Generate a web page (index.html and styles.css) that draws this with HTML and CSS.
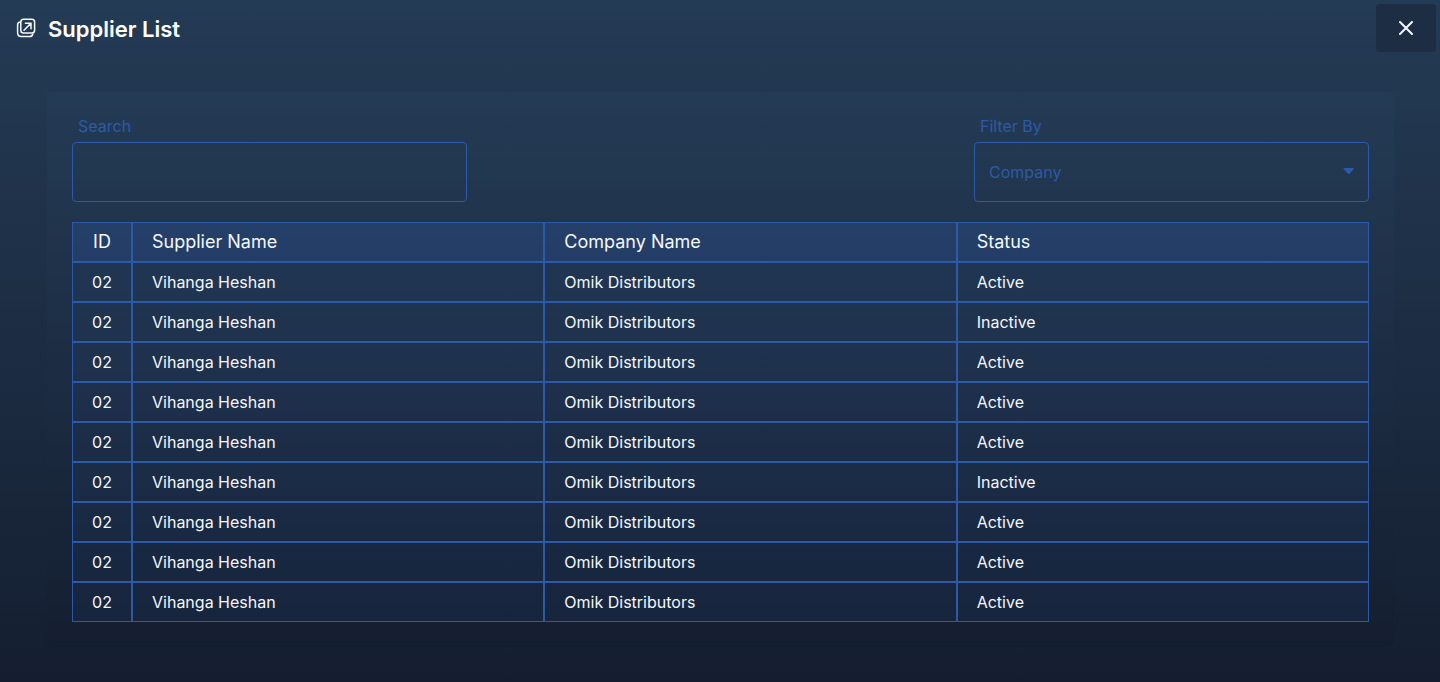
FILE: index.html
```html
<!DOCTYPE html>
<html lang="en">
<head>
<meta charset="utf-8">
<title>Supplier List</title>
<meta name="viewport" content="width=device-width, initial-scale=1">
<link rel="stylesheet" href="styles.css">
</head>
<body>
<header class="topbar">
  <svg class="topbar-icon" viewBox="0 0 20 20" aria-hidden="true">
    <rect x="4.800" y="1.200" width="13.800" height="13.800" rx="2.800"/>
    <path d="M4 4C2.400 4.300 1.600 5.200 1.600 6.800V14.800Q1.600 18.600 5.400 18.600H13.600C15.400 18.600 16.400 17.600 16.800 16"/>
    <path d="M8 12.200 14.600 5.600M9.400 5.200H15V10.800"/>
  </svg>
  <h1 class="title">Supplier List</h1>
  <button class="close" type="button" aria-label="Close">
    <svg class="close-icon" viewBox="0 0 14 14" aria-hidden="true"><path d="M1 1 13 13M13 1 1 13"/></svg>
  </button>
</header>
<main class="panel">
  <form class="filters">
    <div class="field">
      <label class="label" for="search">Search</label>
      <input class="control" id="search" type="text">
    </div>
    <div class="field">
      <label class="label" for="filter">Filter By</label>
      <div class="select-wrap">
        <select class="control select" id="filter"><option>Company</option></select>
        <svg class="caret" viewBox="0 0 12 7" aria-hidden="true"><path d="M1 0H10.500Q11.500 0 10.800 1L6.500 5.700Q5.800 6.500 5 5.700L.6 1Q0 0 1 0Z"/></svg>
      </div>
    </div>
  </form>
  <table class="table">
    <thead><tr><th class="id">ID</th><th>Supplier Name</th><th>Company Name</th><th>Status</th></tr></thead>
    <tbody>
      <tr><td class="id">02</td><td>Vihanga Heshan</td><td>Omik Distributors</td><td>Active</td></tr>
      <tr><td class="id">02</td><td>Vihanga Heshan</td><td>Omik Distributors</td><td>Inactive</td></tr>
      <tr><td class="id">02</td><td>Vihanga Heshan</td><td>Omik Distributors</td><td>Active</td></tr>
      <tr><td class="id">02</td><td>Vihanga Heshan</td><td>Omik Distributors</td><td>Active</td></tr>
      <tr><td class="id">02</td><td>Vihanga Heshan</td><td>Omik Distributors</td><td>Active</td></tr>
      <tr><td class="id">02</td><td>Vihanga Heshan</td><td>Omik Distributors</td><td>Inactive</td></tr>
      <tr><td class="id">02</td><td>Vihanga Heshan</td><td>Omik Distributors</td><td>Active</td></tr>
      <tr><td class="id">02</td><td>Vihanga Heshan</td><td>Omik Distributors</td><td>Active</td></tr>
      <tr><td class="id">02</td><td>Vihanga Heshan</td><td>Omik Distributors</td><td>Active</td></tr>
    </tbody>
  </table>
</main>
</body>
</html>
```
FILE: styles.css
```css
:root {
  --blue: #2d5aa8;
}

* {
  box-sizing: border-box;
}

body {
  margin: 0;
  min-height: 100vh;
  background: linear-gradient(#243b55, #141e30);
  color: #f5f7fa;
  font-family: Inter, "Liberation Sans", sans-serif;
  font-size: 16px;
}

.topbar {
  display: flex;
  align-items: center;
  gap: 12px;
  padding: 4px 4px 4px 16px;
}

.topbar-icon {
  width: 20px;
  height: 20px;
  fill: none;
  stroke: #f5f7fa;
  stroke-width: 1.5;
  stroke-linecap: round;
  stroke-linejoin: round;
}

.title {
  flex: 1;
  margin: 0;
  padding-top: 2px;
  color: #fff;
  font-size: 22px;
  font-weight: 600;
  line-height: 28px;
}

.close {
  display: flex;
  align-items: center;
  justify-content: center;
  width: 60px;
  height: 48px;
  padding: 0;
  border: 0;
  border-radius: 4px;
  background: #1d2d44;
}

.close-icon {
  width: 14px;
  height: 14px;
  fill: none;
  stroke: #f5f7fa;
  stroke-width: 2;
  stroke-linecap: round;
}

.panel {
  margin: 36px 46px 0 47px;
  padding: 25px;
  border-radius: 4px;
  background: linear-gradient(#243b55, #141e30);
}

.filters {
  display: flex;
  justify-content: space-between;
  margin-bottom: 20px;
}

.field {
  width: 395px;
}

.label {
  display: block;
  height: 25px;
  padding-left: 6px;
  color: var(--blue);
  line-height: 18px;
}

.control {
  display: block;
  width: 100%;
  height: 60px;
  padding: 0 14px;
  border: 1px solid var(--blue);
  border-radius: 4px;
  outline: 0;
  background: transparent;
  color: var(--blue);
  font: inherit;
}

.select {
  appearance: none;
}

.select-wrap {
  position: relative;
}

.caret {
  position: absolute;
  top: 26px;
  right: 14px;
  width: 12px;
  height: 7px;
  fill: var(--blue);
  pointer-events: none;
}

.table {
  width: 100%;
  border: 0;
  border-spacing: 0;
  table-layout: fixed;
}

.table th,
.table td {
  height: 40px;
  padding: 0 19px;
  border: 1px solid var(--blue);
  background: rgba(45, 90, 168, 0.1);
  font-weight: 400;
  line-height: 20px;
  text-align: left;
}

.table th {
  background: rgba(45, 90, 168, 0.3);
  font-size: 18px;
  line-height: 22px;
}

.table .id {
  width: 60px;
  padding: 0;
  text-align: center;
}
```
